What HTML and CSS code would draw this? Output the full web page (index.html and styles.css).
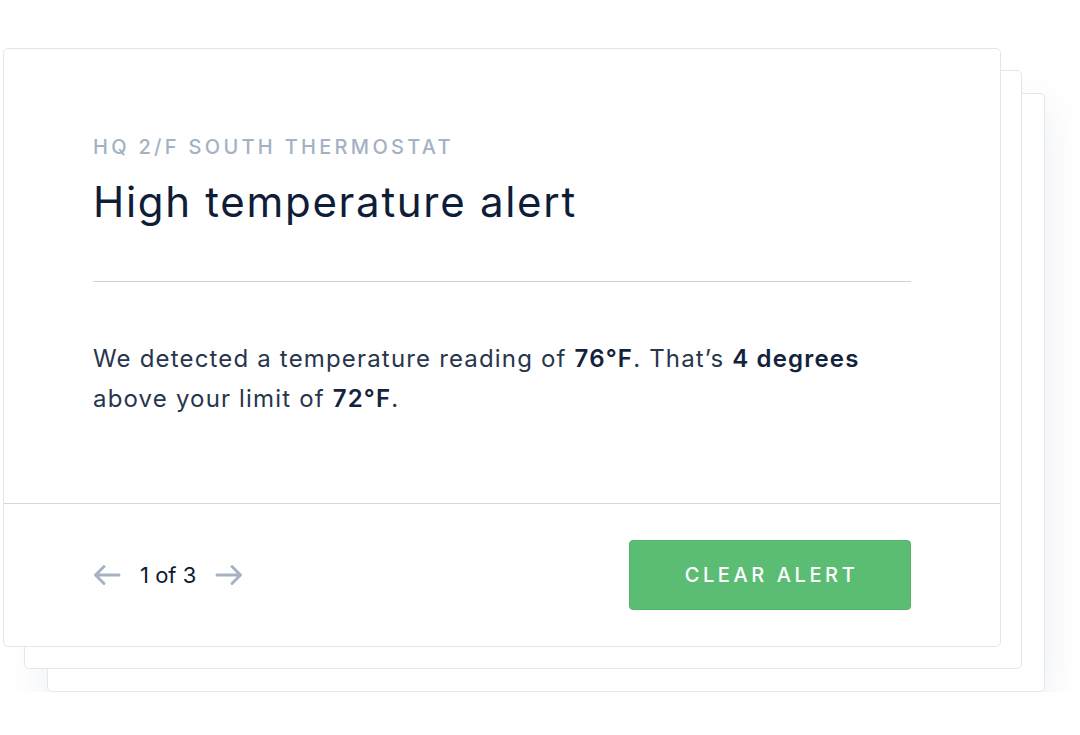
FILE: index.html
```html
<!DOCTYPE html>
<html lang="en">
<head>
<meta charset="utf-8">
<title>High temperature alert</title>
<link rel="stylesheet" href="styles.css">
</head>
<body>
<div class="stage">
  <div class="sheet sheet-back2"></div>
  <div class="sheet sheet-back1"></div>
  <div class="card">
    <div class="card-body">
      <div class="label">HQ 2/F SOUTH THERMOSTAT</div>
      <h1 class="title">High temperature alert</h1>
      <hr class="rule">
      <p class="message">We detected a temperature reading of <strong>76°F</strong>. That’s <strong>4 degrees</strong><br>above your limit of <strong>72°F</strong>.</p>
    </div>
    <div class="card-footer">
      <div class="pager">
        <svg class="arrow" width="28" height="22" viewBox="0 0 28 22" aria-hidden="true"><path d="M26 11H2.5M11 2.5L2.5 11L11 19.5" fill="none" stroke="#a5b3c3" stroke-width="3" stroke-linecap="round" stroke-linejoin="round"/></svg>
        <span class="count">1 of 3</span>
        <svg class="arrow" width="28" height="22" viewBox="0 0 28 22" aria-hidden="true"><path d="M2 11H25.5M17 2.5L25.5 11L17 19.5" fill="none" stroke="#a5b3c3" stroke-width="3" stroke-linecap="round" stroke-linejoin="round"/></svg>
      </div>
      <button class="btn">CLEAR ALERT</button>
    </div>
  </div>
</div>
</body>
</html>
```
FILE: styles.css
```css
html, body {
  margin: 0;
  padding: 0;
  background: #ffffff;
}
body {
  font-family: "Inter", "Open Sans", sans-serif;
  color: #1d2b42;
}
.stage {
  position: relative;
  width: 998px;
  margin: 48px 0 0 3px;
  padding-bottom: 45px;
}
.sheet {
  position: absolute;
  width: 998px;
  height: 599px;
  box-sizing: border-box;
  background: #ffffff;
  border: 1px solid #e4e7eb;
  border-radius: 5px;
}
.sheet-back1 {
  left: 21px;
  top: 22px;
}
.sheet-back2 {
  left: 44px;
  top: 45px;
  box-shadow: 0 12px 40px rgba(30, 50, 90, 0.09);
}
.card {
  position: relative;
  box-sizing: border-box;
  width: 998px;
  background: #ffffff;
  border: 1px solid #e2e5e9;
  border-radius: 5px;
}
.card-body {
  padding: 86px 89px 0 89px;
  height: 454px;
  box-sizing: border-box;
}
.label {
  font-size: 20px;
  line-height: 24px;
  letter-spacing: 3.3px;
  color: #a4b2c3;
  font-weight: 500;
}
.title {
  margin: 18px 0 0 0;
  font-size: 42px;
  line-height: 50px;
  font-weight: 400;
  letter-spacing: 1.7px;
  color: #0e1d38;
}
.rule {
  margin: 54px 0 0 0;
  border: 0;
  height: 1px;
  background: #ccd3dc;
}
.message {
  margin: 57px 0 0 0;
  font-size: 24px;
  line-height: 40px;
  letter-spacing: 1.17px;
  color: #27364d;
  white-space: nowrap;
}
.message strong {
  font-weight: 600;
  color: #14233d;
}
.card-footer {
  border-top: 1px solid #d3d8e0;
  display: flex;
  align-items: center;
  justify-content: space-between;
  padding: 36px 89px;
}
.pager {
  display: flex;
  align-items: center;
  gap: 19px;
}
.arrow {
  display: block;
}
.count {
  font-size: 22px;
  color: #0c1a33;
}
.btn {
  width: 282px;
  height: 70px;
  border: 1px solid #52b569;
  border-radius: 4px;
  background: #5bbd73;
  color: #ffffff;
  font-family: inherit;
  font-size: 20px;
  font-weight: 500;
  letter-spacing: 3.6px;
  padding: 0 0 0 3px;
  cursor: pointer;
}
```
